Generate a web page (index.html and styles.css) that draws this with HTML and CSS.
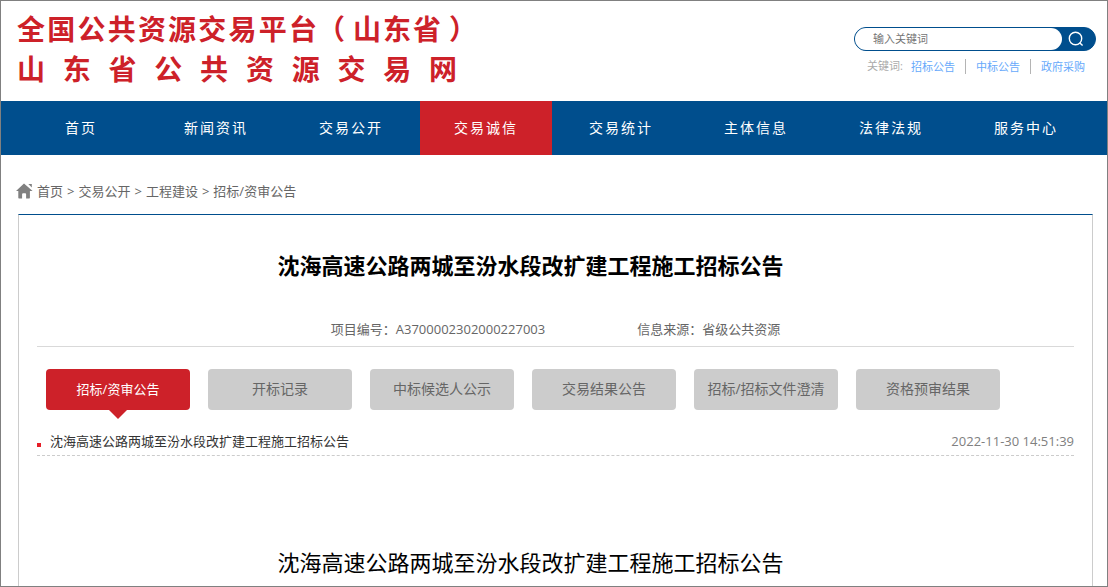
FILE: index.html
```html
<!DOCTYPE html>
<html lang="zh-CN">
<head>
<meta charset="utf-8">
<meta name="viewport" content="width=device-width, initial-scale=1">
<title>沈海高速公路两城至汾水段改扩建工程施工招标公告</title>
<link rel="stylesheet" href="styles.css">
</head>
<body class="page">
  <header class="header">
    <div class="logo">
      <div class="logo-line logo-line-main"><span class="logo-name">全国公共资源交易平台</span><span>（</span><span class="logo-region">山东省</span><span>）</span></div>
      <div class="logo-line logo-line-sub">山东省公共资源交易网</div>
    </div>
    <div class="search-area">
      <form class="search">
        <input class="search-input" type="text" placeholder="输入关键词" aria-label="输入关键词">
        <button class="search-button" type="button" aria-label="搜索">
          <svg width="16" height="16" viewBox="0 0 16 16" fill="none" stroke="currentColor" stroke-width="1.4">
            <circle cx="7.5" cy="7.5" r="6.2"/>
            <path d="M11.6 11.8L14.6 14.6"/>
          </svg>
        </button>
      </form>
      <div class="keywords">
        <span class="keywords-label">关键词:</span>
        <a class="keyword" href="#">招标公告</a>
        <a class="keyword" href="#">中标公告</a>
        <a class="keyword" href="#">政府采购</a>
      </div>
    </div>
  </header>

  <nav class="nav">
    <a class="nav-item" href="#">首页</a>
    <a class="nav-item" href="#">新闻资讯</a>
    <a class="nav-item" href="#">交易公开</a>
    <a class="nav-item nav-item-active" href="#">交易诚信</a>
    <a class="nav-item" href="#">交易统计</a>
    <a class="nav-item" href="#">主体信息</a>
    <a class="nav-item" href="#">法律法规</a>
    <a class="nav-item" href="#">服务中心</a>
  </nav>

  <div class="breadcrumb">
    <svg class="home-icon" width="17" height="16" viewBox="0 0 17 16" fill="currentColor">
      <path d="M8 0.5L0 8h2.3v6.8q0 .7.7.7h3.1v-4.2q0-1 1-1h2q1 0 1 1v4.2h3.1q.7 0 .7-.7V8H16.6z"/>
      <path d="M12.3 1h3.5v3.6z"/>
    </svg>
    <a class="crumb" href="#">首页</a>
    <span>&gt;</span>
    <a class="crumb" href="#">交易公开</a>
    <span>&gt;</span>
    <a class="crumb" href="#">工程建设</a>
    <span>&gt;</span>
    <a class="crumb" href="#">招标/资审公告</a>
  </div>

  <main class="panel">
    <h1 class="title">沈海高速公路两城至汾水段改扩建工程施工招标公告</h1>
    <div class="meta">
      <span>项目编号：A3700002302000227003</span>
      <span>信息来源：省级公共资源</span>
    </div>
    <div class="tabs">
      <button class="tab tab-active" type="button">招标/资审公告</button>
      <button class="tab" type="button">开标记录</button>
      <button class="tab" type="button">中标候选人公示</button>
      <button class="tab" type="button">交易结果公告</button>
      <button class="tab" type="button">招标/招标文件澄清</button>
      <button class="tab" type="button">资格预审结果</button>
    </div>
    <div class="notice">
      <a class="notice-link" href="#">沈海高速公路两城至汾水段改扩建工程施工招标公告</a>
      <time class="notice-time">2022-11-30 14:51:39</time>
    </div>
    <h2 class="article-title">沈海高速公路两城至汾水段改扩建工程施工招标公告</h2>
  </main>
</body>
</html>
```

FILE: styles.css
```css
* {
  box-sizing: border-box;
}

.page {
  display: flex;
  flex-direction: column;
  min-height: 100vh;
  margin: 0;
  border: 1px solid #808080;
  background: #fff;
  color: #666;
  font-family: "Open Sans", "Noto Sans CJK SC", sans-serif;
  font-size: 13px;
  line-height: 20px;
}

a {
  color: inherit;
  text-decoration: none;
}

button,
input {
  font: inherit;
}

.header {
  display: flex;
  justify-content: space-between;
  align-items: flex-start;
  height: 100px;
  padding: 7px 11px 0 16px;
}

.logo {
  color: #cd2129;
  font-family: "Noto Sans CJK SC", sans-serif;
  font-size: 28px;
  font-weight: 700;
  line-height: 40px;
  text-align-last: justify;
  text-spacing-trim: space-all;
  white-space: nowrap;
}

.logo-line-main {
  display: flex;
}

.logo-name {
  width: 300px;
}

.logo-region {
  width: 104px;
  padding: 0 8px;
}

.logo-line-sub {
  width: 440px;
}

.search-area {
  width: 242px;
  padding-top: 19px;
}

.search {
  display: flex;
  height: 24px;
  border: 1px solid #004e8d;
  border-radius: 12px;
  background: #004e8d;
}

.search-input {
  flex: 1;
  min-width: 0;
  padding: 0 18px;
  border: 0;
  border-radius: 11px;
  outline: 0;
  background: #fff;
  color: #666;
  font-size: 11px;
}

.search-input::placeholder {
  color: #757575;
}

.search-button {
  display: flex;
  align-items: center;
  justify-content: center;
  width: 33px;
  padding: 0 6px 0 0;
  border: 0;
  background: none;
  color: #fff;
}

.keywords {
  display: flex;
  align-items: center;
  justify-content: flex-end;
  padding: 5px 11px 0 0;
  font-size: 11px;
}

.keywords-label {
  margin-right: 8px;
  color: #aaa;
}

.keyword {
  color: #66a9fb;
  line-height: 15px;
}

.keyword + .keyword {
  margin-left: 10px;
  padding-left: 10px;
  border-left: 1px solid #b4b4b4;
}

.nav {
  display: grid;
  grid-template-columns: repeat(8, 1fr);
  gap: 3px;
  padding: 0 15px 0 14px;
  background: #004e8d;
}

.nav-item {
  color: #fff;
  font-size: 14px;
  letter-spacing: 2px;
  line-height: 54px;
  text-align: center;
}

.nav-item-active {
  background: #cd2129;
}

.breadcrumb {
  display: flex;
  align-items: center;
  gap: 4px;
  padding: 26px 15px 13px;
}

.home-icon {
  color: #808080;
}

.panel {
  flex: 1;
  margin: 0 14px 0 17px;
  padding: 0 18px;
  border: solid #ccc;
  border-width: 0 1px;
  border-top: 1px solid #004e8d;
}

.title,
.article-title {
  margin: 0;
  padding-right: 50px;
  color: #000;
  font-size: 22px;
  line-height: 32px;
  text-align: center;
}

.title {
  padding-top: 34px;
}

.article-title {
  padding-top: 90px;
  font-weight: 400;
}

.meta {
  display: flex;
  justify-content: center;
  gap: 92px;
  padding: 38px 0 7px;
  border-bottom: 1px solid #d9d9d9;
}

.tabs {
  display: flex;
  gap: 18px;
  padding: 22px 9px 21px;
}

.tab {
  position: relative;
  width: 144px;
  height: 41px;
  padding: 0 0 2px;
  border: 0;
  border-radius: 4px;
  background: #ccc;
  color: #666;
  font-size: 14px;
  white-space: nowrap;
}

.tab-active {
  background: #cd2129;
  color: #fff;
  font-size: 13px;
}

.tab-active::after {
  content: "";
  position: absolute;
  top: 100%;
  left: calc(50% - 9px);
  border: 9px solid transparent;
  border-top-color: #cd2129;
  border-bottom: 0;
}

.notice {
  display: flex;
  align-items: center;
  justify-content: space-between;
  padding-bottom: 4px;
  border-bottom: 1px dashed #ccc;
}

.notice-link {
  display: flex;
  align-items: center;
  gap: 9px;
  color: #333;
}

.notice-link::before {
  content: "";
  width: 4px;
  height: 4px;
  margin-top: 7px;
  background: #e61e28;
}

.notice-time {
  color: #808080;
}
```
